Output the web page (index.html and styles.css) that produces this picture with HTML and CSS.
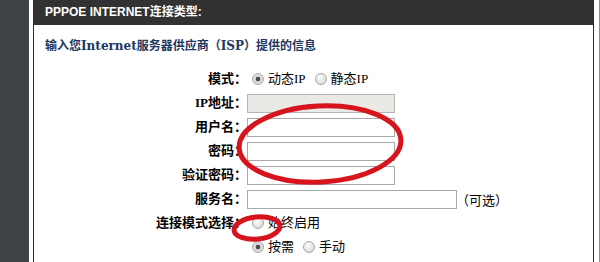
FILE: index.html
```html
<!DOCTYPE html>
<html lang="zh-CN">
<head>
    <meta charset="UTF-8">
    <title>PPPOE</title>
    <link rel="stylesheet" href="styles.css">
</head>
<body>

<div class="sidebar"></div>

<div class="panel">
    <div class="panel-title">PPPOE INTERNET连接类型:</div>

    <div class="intro">输入您Internet服务器供应商（ISP）提供的信息</div>

    <div class="form">
        <div class="label">模式：</div>
        <div class="field">
            <label class="opt"><input type="radio" name="mode" checked>动态IP</label>
            <label class="opt"><input type="radio" name="mode">静态IP</label>
        </div>

        <div class="label">IP地址：</div>
        <div class="field"><input type="text" class="box" disabled></div>

        <div class="label">用户名：</div>
        <div class="field"><input type="text" class="box"></div>

        <div class="label">密码：</div>
        <div class="field"><input type="password" class="box"></div>

        <div class="label">验证密码：</div>
        <div class="field"><input type="password" class="box"></div>

        <div class="label">服务名：</div>
        <div class="field"><input type="text" class="box wide"><span class="hint">（可选）</span></div>

        <div class="label">连接模式选择：</div>
        <div class="field">
            <label class="opt"><input type="radio" name="conn">始终启用</label>
        </div>

        <div class="label"></div>
        <div class="field">
            <label class="opt"><input type="radio" name="conn" checked>按需</label>
            <label class="opt"><input type="radio" name="conn">手动</label>
        </div>
    </div>
</div>

<div class="edge"></div>

<!-- marcas rojas encima de la captura -->
<svg class="marks" width="600" height="262" viewBox="0 0 600 262">
    <ellipse cx="320" cy="144" rx="81" ry="38" transform="rotate(-3 320 144)" />
    <ellipse cx="257" cy="228" rx="23" ry="11" transform="rotate(-6 257 228)" />
</svg>

</body>
</html>
```

FILE: styles.css
```css
body {
    margin: 0;
    padding: 0;
    height: 262px;
    overflow: hidden;
    display: flex;
    position: relative;
    background: #fff;
    font-family: "Liberation Serif", "Noto Sans CJK SC", serif;
    font-size: 13px;
    color: #000;
}

.sidebar {
    width: 29px;
    background-color: #3f4345;
    margin-right: 4px;
}

.panel {
    width: 559px;
    border-left: 1px solid #2b2b2b;
    border-right: 1px solid #2b2b2b;
}

.edge {
    width: 1px;
    margin-left: 5px;
    background-color: #8c8c8c;
}

.panel-title {
    height: 25px;
    line-height: 25px;
    padding-left: 11px;
    background-color: #323232;
    color: #fff;
    font-family: "Liberation Sans", "Noto Sans CJK SC", sans-serif;
    font-size: 12px;
    font-weight: bold;
}

.intro {
    padding: 11px 11px 0;
    line-height: 20px;
    font-family: "DejaVu Serif", "Noto Sans CJK SC", serif;
    font-size: 12px;
    font-weight: bold;
    color: #1c3760;
}

.form {
    margin-top: 11px;
    display: grid;
    grid-template-columns: 213px 1fr;
    grid-auto-rows: 24px;
}

.label {
    text-align: right;
    font-weight: bold;
    line-height: 24px;
    white-space: nowrap;
}

.field {
    display: flex;
    align-items: center;
    gap: 4px;
}

.opt {
    display: inline-flex;
    align-items: center;
    line-height: 24px;
}

/* radios grises como en el router */
.opt input {
    appearance: none;
    -webkit-appearance: none;
    width: 12px;
    height: 12px;
    margin: 0 4px 0 5px;
    border: 1px solid #a8a8a8;
    border-radius: 50%;
    background: radial-gradient(circle at 40% 35%, #fdfdfd 0, #e2e2e2 60%, #cfcfcf 100%);
    box-sizing: border-box;
}

.opt input:checked {
    background: radial-gradient(circle, #4a4a4a 0, #4a4a4a 2px, #d8d8d8 2.6px, #e8e8e8 100%);
}

.box {
    width: 148px;
    height: 19px;
    margin: 0;
    padding: 0 2px;
    box-sizing: border-box;
    border: 1px solid #a9a9a9;
    background: #fff;
    font-size: 12px;
}

.box:disabled {
    background: #ebe9e5;
    border-color: #b5b5b5;
}

.box.wide {
    width: 210px;
}

.hint {
    margin-left: -5px;
    font-size: 13px;
}

.marks {
    position: absolute;
    top: 0;
    left: 0;
    pointer-events: none;
}

.marks ellipse {
    fill: none;
    stroke: #d7141d;
    stroke-width: 5;
}
```
